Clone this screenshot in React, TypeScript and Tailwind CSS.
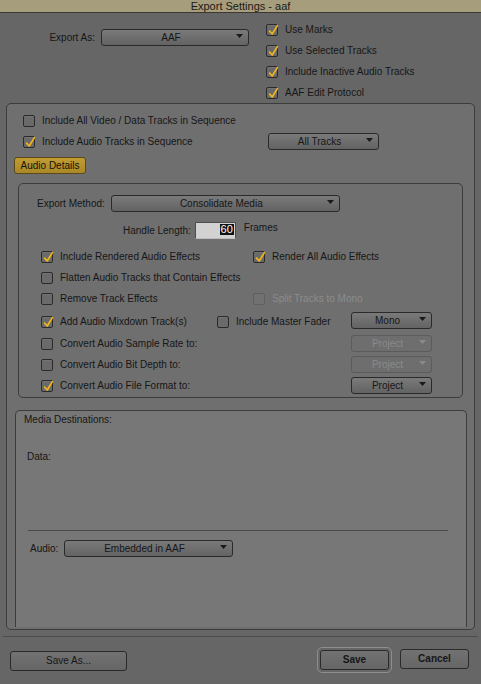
import React from "react";

function Box({ on = false, off = false }: { on?: boolean; off?: boolean }) {
  return (
    <span
      className={`relative flex h-[12px] w-[12px] shrink-0 rounded-[2px] border ${
        off
          ? "border-[#5f5f5f] bg-[#717171]"
          : "border-[#2a2a2a] bg-[#6a6a6a] shadow-[inset_0_1px_0_rgba(255,255,255,0.07)]"
      }`}
    >
      {on && (
        <svg
          className="absolute left-[1px] top-[-1px] overflow-visible"
          width="11"
          height="12"
          viewBox="0 0 11 12"
        >
          <path
            d="M1.6 7.2 L4.2 10 L9.4 1.6"
            fill="none"
            stroke="#f2b61c"
            strokeWidth="1.7"
            strokeLinecap="round"
            strokeLinejoin="round"
          />
        </svg>
      )}
    </span>
  );
}

function Item({ label, on = false, off = false }: { label: string; on?: boolean; off?: boolean }) {
  return (
    <div className="flex items-center gap-[7px]">
      <Box on={on} off={off} />
      <span className={off ? "text-[#8c8c8c]" : "text-[#161616]"}>{label}</span>
    </div>
  );
}

function Drop({ label, w, off = false }: { label: string; w: string; off?: boolean }) {
  return (
    <div
      className={`flex h-[17px] ${w} shrink-0 items-start rounded-[3px] border ${
        off
          ? "border-[#5b5b5b] bg-[#6e6e6e] text-[#8a8a8a]"
          : "border-[#2a2a2a] bg-gradient-to-b from-[#7a7a7a] to-[#636363] text-[#161616]"
      }`}
    >
      <span className="flex-1 pl-[4px] text-center leading-[15px]">{label}</span>
      <svg className="mr-[5px] mt-[4px] shrink-0" width="7" height="4" viewBox="0 0 7 4">
        <path d="M0 0H7L3.5 4Z" fill={off ? "#8a8a8a" : "#1a1a1a"} />
      </svg>
    </div>
  );
}

function Btn({ label, w, bold = false }: { label: string; w: string; bold?: boolean }) {
  return (
    <div
      className={`flex h-[20px] ${w} shrink-0 items-center justify-center rounded-[3px] border border-[#2a2a2a] bg-gradient-to-b from-[#727272] to-[#666666] text-[#161616] ${
        bold ? "font-bold" : ""
      }`}
    >
      {label}
    </div>
  );
}

export default function App() {
  return (
    <div className="flex h-[684px] w-[481px] flex-col overflow-hidden bg-[#666666] font-['Liberation_Sans',Arial,sans-serif] text-[10px] leading-[12px] text-[#161616]">
      {/* title bar */}
      <div className="h-[13px] shrink-0 border-b border-[#3a3830] bg-[#a69d7d] text-center text-[11px] leading-[12px] text-[#1c1a14]">
        Export Settings - aaf
      </div>

      {/* export type + global options */}
      <div className="flex h-[90px] shrink-0 pt-[6px]">
        <div className="flex w-[266px] items-start justify-end gap-[6px] pr-[17px] pt-[10px]">
          <span className="leading-[17px]">Export As:</span>
          <Drop label="AAF" w="w-[148px]" />
        </div>
        <div className="flex flex-col">
          <div className="flex h-[21px] items-center">
            <Item on label="Use Marks" />
          </div>
          <div className="flex h-[21px] items-center">
            <Item on label="Use Selected Tracks" />
          </div>
          <div className="flex h-[21px] items-center">
            <Item on label="Include Inactive Audio Tracks" />
          </div>
          <div className="flex h-[21px] items-center">
            <Item on label="AAF Edit Protocol" />
          </div>
        </div>
      </div>

      {/* sequence panel */}
      <div className="mx-[6px] flex h-[527px] shrink-0 flex-col rounded-[5px] border border-[#3c3c3c] bg-[#6f6f6f] px-[7px] pb-[2px] pt-[6px]">
        <div className="flex h-[21px] items-center pl-[9px]">
          <Item label="Include All Video / Data Tracks in Sequence" />
        </div>
        <div className="flex h-[21px] items-center pl-[9px]">
          <div className="w-[245px]">
            <Item on label="Include Audio Tracks in Sequence" />
          </div>
          <Drop label="All Tracks" w="w-[111px]" />
        </div>
        <div className="mt-[5px] flex h-[17px] w-[72px] items-center justify-center rounded-[3px] border border-[#5a4816] bg-gradient-to-b from-[#c19c32] to-[#a98828] text-[#161208]">
          Audio Details
        </div>

        {/* audio details */}
        <div className="ml-[4px] mt-[9px] flex h-[215px] w-[445px] shrink-0 flex-col rounded-[5px] border border-[#3c3c3c] pt-[11px]">
          <div className="flex h-[17px] items-center gap-[6px] pl-[18px]">
            <span>Export Method:</span>
            <Drop label="Consolidate Media" w="w-[229px]" />
          </div>
          <div className="mt-[10px] flex h-[17px] items-center pl-[104px]">
            <span>Handle Length:</span>
            <div className="ml-[4px] flex h-[17px] w-[41px] items-start justify-end border border-[#4d4d4d] border-b-[#bdbdbd] bg-[#d2d2d2] pr-[1px] pt-[1px]">
              <span className="bg-[#111111] px-[1px] text-[11px] leading-[11px] text-white">60</span>
            </div>
            <span className="ml-[8px] -mt-[5px]">Frames</span>
          </div>

          <div className="mt-[7px] flex h-[21px] items-center pl-[22px]">
            <div className="w-[212px]">
              <Item on label="Include Rendered Audio Effects" />
            </div>
            <Item on label="Render All Audio Effects" />
          </div>
          <div className="flex h-[21px] items-center pl-[22px]">
            <Item label="Flatten Audio Tracks that Contain Effects" />
          </div>
          <div className="flex h-[22px] items-center pl-[22px]">
            <div className="w-[212px]">
              <Item label="Remove Track Effects" />
            </div>
            <Item off label="Split Tracks to Mono" />
          </div>
          <div className="flex h-[23px] items-center pl-[22px]">
            <div className="w-[176px]">
              <Item on label="Add Audio Mixdown Track(s)" />
            </div>
            <div className="w-[134px]">
              <Item label="Include Master Fader" />
            </div>
            <div className="-mt-[3px]">
              <Drop label="Mono" w="w-[81px]" />
            </div>
          </div>
          <div className="flex h-[21px] items-center pl-[22px]">
            <div className="w-[310px]">
              <Item label="Convert Audio Sample Rate to:" />
            </div>
            <div className="-mt-[1px]">
              <Drop off label="Project" w="w-[81px]" />
            </div>
          </div>
          <div className="flex h-[21px] items-center pl-[22px]">
            <div className="w-[310px]">
              <Item label="Convert Audio Bit Depth to:" />
            </div>
            <div className="-mt-[1px]">
              <Drop off label="Project" w="w-[81px]" />
            </div>
          </div>
          <div className="flex h-[22px] items-center pl-[22px]">
            <div className="w-[310px]">
              <Item on label="Convert Audio File Format to:" />
            </div>
            <div className="-mt-[2px]">
              <Drop label="Project" w="w-[81px]" />
            </div>
          </div>
        </div>

        {/* media destinations */}
        <div className="ml-[1px] mt-[12px] flex w-[452px] flex-1 flex-col rounded-t-[5px] border border-b-0 border-[#3c3c3c] bg-[#777777] pl-[8px] pt-[3px]">
          <span>Media Destinations:</span>
          <span className="ml-[3px] mt-[25px]">Data:</span>
          <div className="ml-[4px] mt-[67px] h-px w-[420px] bg-[#4a4a4a]" />
          <div className="ml-[6px] mt-[9px] flex h-[17px] items-center">
            <span className="w-[34px]">Audio:</span>
            <Drop label="Embedded in AAF" w="w-[169px]" />
          </div>
        </div>
      </div>

      <div className="mx-[3px] mt-[6px] h-px shrink-0 bg-[#4c4c4c]" />

      {/* dialog buttons */}
      <div className="mt-[10px] flex h-[26px] shrink-0 items-center">
        <div className="ml-[10px] mt-[2px]">
          <Btn label="Save As..." w="w-[117px]" />
        </div>
        <div className="ml-auto flex h-[26px] w-[75px] items-center justify-center rounded-[5px] border border-[#8e8e8e]">
          <Btn bold label="Save" w="w-[69px]" />
        </div>
        <div className="ml-[8px] mr-[12px] -mt-[2px]">
          <Btn bold label="Cancel" w="w-[69px]" />
        </div>
      </div>
    </div>
  );
}
